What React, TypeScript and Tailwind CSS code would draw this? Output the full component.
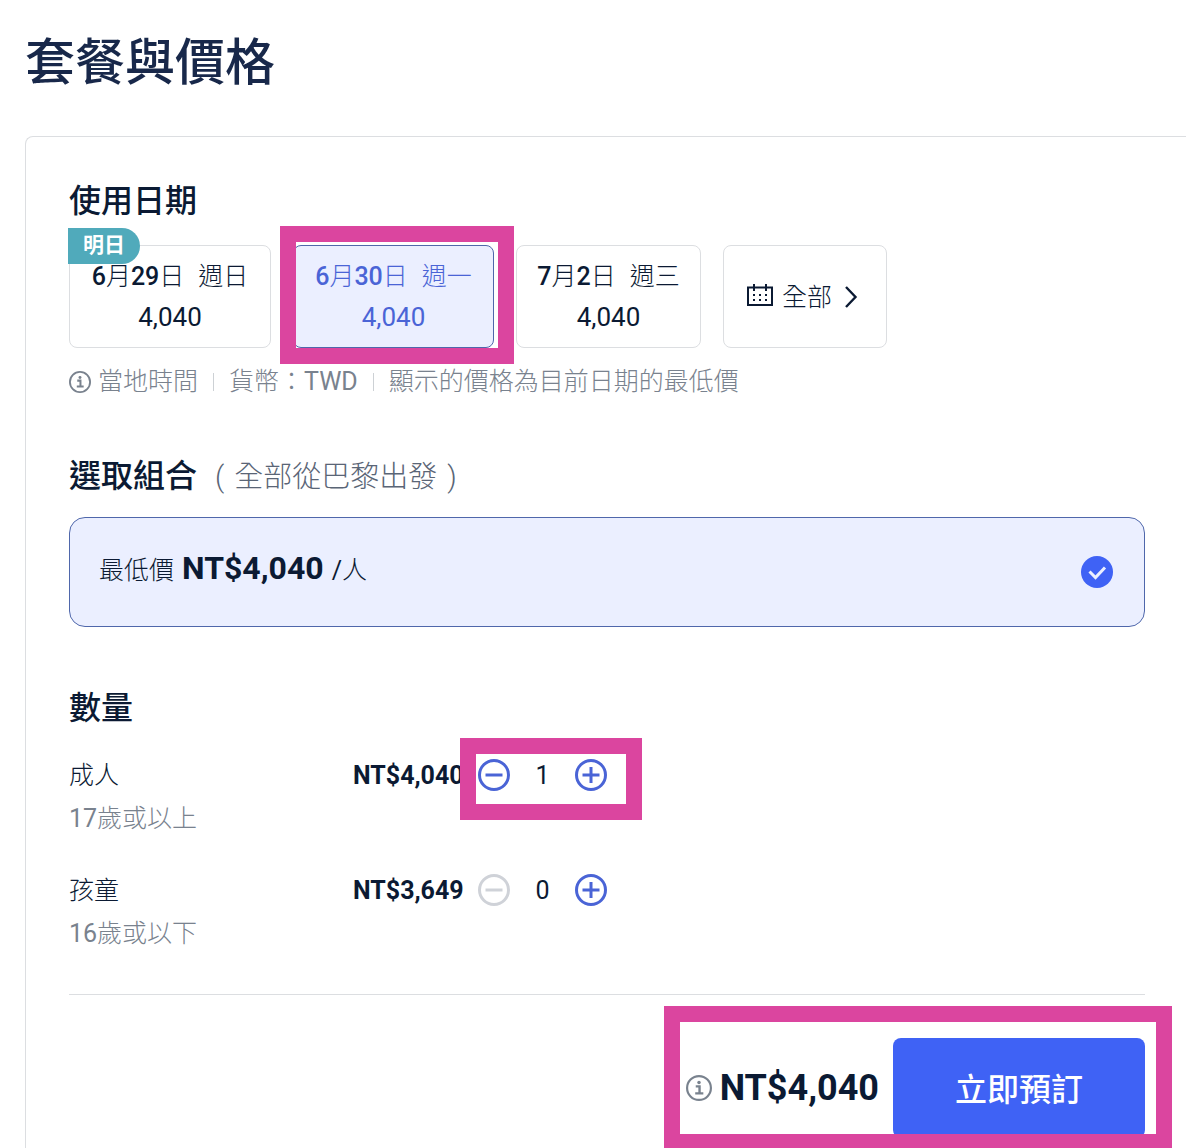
import { useState } from 'react';
import type { ReactNode } from 'react';
import clsx from 'clsx';

const dates = [
  { month: 6, day: 29, weekday: '週日', price: 4040, width: 'w-[202px]', tag: '明日' },
  { month: 6, day: 30, weekday: '週一', price: 4040, width: 'w-[201px]' },
  { month: 7, day: 2, weekday: '週三', price: 4040, width: 'w-[185px]' },
];

const tickets = [
  { id: 'adult', name: '成人', age: 17, note: '歲或以上', price: 4040 },
  { id: 'child', name: '孩童', age: 16, note: '歲或以下', price: 3649 },
];

const format = (value: number) => value.toLocaleString('en-US');

export default function App() {
  const [selected, setSelected] = useState(1);
  const [counts, setCounts] = useState<Record<string, number>>({
    adult: 1,
    child: 0,
  });

  const total = tickets.reduce((sum, t) => sum + t.price * counts[t.id], 0);

  return (
    <main
      lang="zh-Hant"
      className="overflow-x-hidden bg-white pt-7 pl-[25px] font-[Roboto,'Noto_Sans_CJK_TC',sans-serif] text-[25px] font-normal text-[#0b1a33]"
    >
      <h1 className="text-[50px] leading-[70px] font-medium text-[#18284a]">
        套餐與價格
      </h1>
      <div className="mt-[38px] rounded-tl-lg border-t border-l border-[#dcdee1] pt-11 pr-[41px] pb-[10px] pl-[43px]">
        <section>
          <SectionTitle>使用日期</SectionTitle>
          <div className="mt-6 flex gap-[22px]">
            {dates.map((date, i) => (
              <button
                key={date.day}
                type="button"
                aria-pressed={selected === i}
                onClick={() => setSelected(i)}
                className={clsx(
                  'relative h-[103px] rounded-lg border leading-10',
                  date.width,
                  selected === i
                    ? 'border-[#4f67ab] bg-[#ebefff] text-[#4a64d6]'
                    : 'border-[#dcdee1]',
                )}
              >
                {date.tag && (
                  <span className="absolute -top-[18px] -left-[2px] h-9 w-[72px] rounded-tl-sm rounded-r-full bg-[#50aabb] text-[21px] leading-[34px] font-bold text-white">
                    {date.tag}
                  </span>
                )}
                <span className="flex justify-center gap-[14px] font-light">
                  <span>
                    <b className="font-medium">{date.month}</b>月
                    <b className="font-medium">{date.day}</b>日
                  </span>
                  <span>{date.weekday}</span>
                </span>
                <span className="block text-[26px]">{format(date.price)}</span>
                {i === 1 && <Highlight className="-top-5 -right-[21px] -bottom-[17px] -left-[14px]" />}
              </button>
            ))}
            <button
              type="button"
              className="flex h-[103px] w-[164px] items-center rounded-lg border border-[#dcdee1] pl-[23px] font-light"
            >
              <CalendarIcon />
              <span className="mr-3 ml-[9px] pt-[2px]">全部</span>
              <svg width="14" height="22" viewBox="0 0 14 22" fill="none" stroke="currentColor" strokeWidth="2.4">
                <path d="M2 1l9.500 10L2 21" />
              </svg>
            </button>
          </div>
          <p className="mt-[18px] flex items-center leading-8 font-light text-[#79828e]">
            <InfoIcon className="mr-[7px] size-[22px]" />
            當地時間
            <Separator />
            <span>
              貨幣：<span className="font-normal">TWD</span>
            </span>
            <Separator />
            顯示的價格為目前日期的最低價
          </p>
        </section>

        <section className="mt-[57px]">
          <div className="flex items-center gap-[18px]">
            <SectionTitle>選取組合</SectionTitle>
            <span className="flex gap-[10px] pt-[2px] text-[29px] leading-10 font-light text-[#5a6576]">
              <span>(</span>
              <span>全部從巴黎出發</span>
              <span>)</span>
            </span>
          </div>
          <button
            type="button"
            aria-pressed="true"
            className="mt-5 flex h-[110px] w-full items-center justify-between rounded-2xl border border-[#4f67ab] bg-[#ebefff] pr-[31px] pl-[29px]"
          >
            <span className="flex items-baseline gap-2 pb-2 font-light">
              最低價
              <b className="text-[32px] font-bold">NT$4,040</b>
              <span>
                <span className="font-normal">/</span>人
              </span>
            </span>
            <svg width="32" height="32" viewBox="0 0 32 32" fill="none">
              <circle cx="16" cy="16" r="16" fill="#3f62f5" />
              <path d="M8.500 15.500l6 6 9.500-10" stroke="#ebefff" strokeWidth="3" />
            </svg>
          </button>
        </section>

        <section className="mt-[61px]">
          <SectionTitle>數量</SectionTitle>
          <div className="mt-[26px] flex flex-col gap-[29px]">
            {tickets.map((ticket) => (
              <div
                key={ticket.id}
                className="grid grid-cols-[284px_125px_129px] leading-[43px]"
              >
                <div className="font-light">
                  <p>{ticket.name}</p>
                  <p className="text-[#79828e]">
                    <span className="font-normal">{ticket.age}</span>
                    {ticket.note}
                  </p>
                </div>
                <p className="font-bold">NT${format(ticket.price)}</p>
                <Stepper
                  label={ticket.name}
                  value={counts[ticket.id]}
                  onChange={(n) => setCounts({ ...counts, [ticket.id]: n })}
                  highlighted={ticket.id === 'adult'}
                />
              </div>
            ))}
          </div>
        </section>

        <footer className="mt-[39px] flex justify-end border-t border-[#dcdee1] pt-[43px]">
          <div className="relative flex items-center">
            <InfoIcon className="mr-2 size-[26px] text-[#79828e]" />
            <span className="mr-[14px] text-[36px] leading-10 font-bold">
              NT${format(total)}
            </span>
            <button
              type="button"
              className="h-[100px] w-[252px] rounded-lg bg-[#3f62f5] pt-1 text-[32px] font-medium text-white"
            >
              立即預訂
            </button>
            <Highlight className="-top-8 -right-[27px] -bottom-[10px] -left-[22px] border-b-14" />
          </div>
        </footer>
      </div>
    </main>
  );
}

function SectionTitle({ children }: { children: ReactNode }) {
  return <h2 className="text-[32px] leading-10 font-medium">{children}</h2>;
}

function Separator() {
  return <span className="mx-[15px] h-[18px] w-px bg-[#cdd1d5]" />;
}

// pink frame drawn over the steps to follow
function Highlight({ className }: { className: string }) {
  return (
    <span
      className={clsx(
        'pointer-events-none absolute z-10 border-16 border-[#db459f]',
        className,
      )}
    />
  );
}

function Stepper({
  label,
  value,
  onChange,
  highlighted,
}: {
  label: string;
  value: number;
  onChange: (value: number) => void;
  highlighted: boolean;
}) {
  return (
    <div className="relative flex h-[42px] items-center justify-between">
      <button
        type="button"
        aria-label={`${label} -1`}
        disabled={value === 0}
        onClick={() => onChange(value - 1)}
        className="text-[#4a64d6] disabled:text-[#cfd2d8]"
      >
        <CircleIcon path="M7.500 16h17" />
      </button>
      <span>{value}</span>
      <button
        type="button"
        aria-label={`${label} +1`}
        onClick={() => onChange(value + 1)}
        className="text-[#4a64d6]"
      >
        <CircleIcon path="M7.500 16h17M16 8v16" />
      </button>
      {highlighted && <Highlight className="-top-4 -right-[35px] -bottom-6 -left-[18px]" />}
    </div>
  );
}

function CircleIcon({ path }: { path: string }) {
  return (
    <svg width="32" height="32" viewBox="0 0 32 32" fill="none" stroke="currentColor" strokeWidth="3">
      <circle cx="16" cy="16" r="14.500" />
      <path d={path} />
    </svg>
  );
}

function InfoIcon({ className }: { className: string }) {
  return (
    <svg className={className} viewBox="0 0 24 24" fill="none" stroke="currentColor" strokeWidth="2">
      <circle cx="12" cy="12" r="11" />
      <path d="M9 10.500h3.500v6.500M8.500 17h7.500" strokeWidth="2.2" />
      <circle cx="12" cy="7" r="1.600" fill="currentColor" stroke="none" />
    </svg>
  );
}

function CalendarIcon() {
  return (
    <svg className="mb-1" width="26" height="22" viewBox="0 0 26 22" fill="none" stroke="currentColor" strokeWidth="2">
      <path d="M1 3.500h24v17.500H1zM7 0v7M19 0v7" />
      <path d="M6 11h14M6 16h14" strokeDasharray="2 4" />
    </svg>
  );
}
